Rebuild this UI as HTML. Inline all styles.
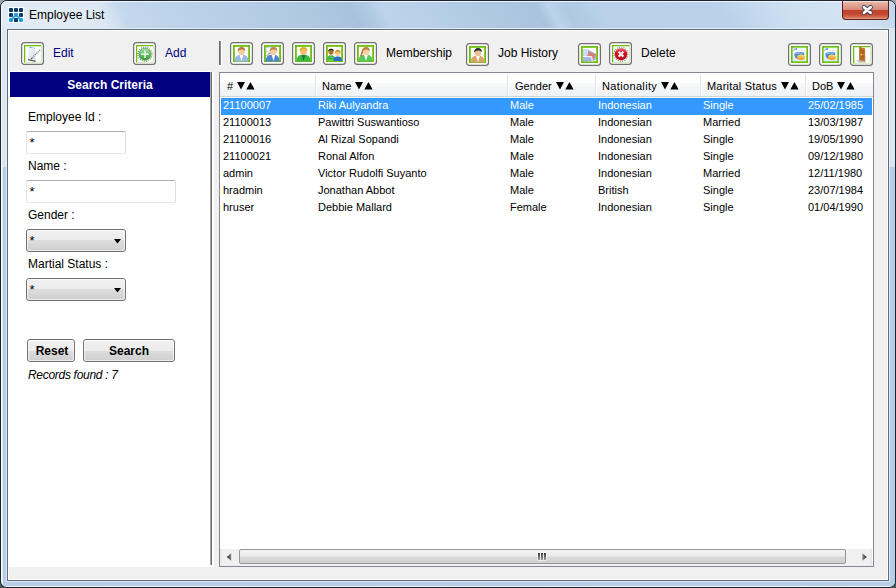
<!DOCTYPE html>
<html><head><meta charset="utf-8">
<style>
*{margin:0;padding:0;box-sizing:border-box}
html,body{width:896px;height:588px;overflow:hidden;background:linear-gradient(#a4a4a4,#8a8e8e 40px,#5a6660 560px,#4a5650);font-family:"Liberation Sans",sans-serif;}
.abs{position:absolute}
#win{position:absolute;left:0;top:0;width:896px;height:588px;border:1px solid #1b2430;border-radius:7px 7px 7px 7px;
 background:radial-gradient(ellipse 70px 22px at 60px 14px,rgba(236,243,250,.55),rgba(236,243,250,0)),linear-gradient(90deg,#dfe9f5 0px,#d8e5f3 100px,#c3d8ed 120px,#b9d0e9 200px,#b0c9e3 300px,#a8c2dd 352px,#b0c9e3 368px,#bcd3eb 384px,#b7cfe8 430px,#a9c3de 538px,#bcd4ec 552px,#afc9e3 568px,#b8d0ea 600px,#b9d1ea 720px,#cde0f2 790px,#d3e3f3 842px,#c2d7ec 896px);overflow:hidden}
#win:before{content:"";position:absolute;left:0;top:0;right:0;bottom:0;border:1px solid rgba(255,255,255,.75);border-radius:6px 6px 6px 6px}
#titlebg{position:absolute;left:2px;top:2px;width:892px;height:25px;background:radial-gradient(ellipse 70px 22px at 59px 13px,rgba(236,243,250,.55),rgba(236,243,250,0)),linear-gradient(60deg,#dfe9f5 5.6px,#d8e5f3 92.2px,#c3d8ed 109.6px,#b9d0e9 178.8px,#b0c9e3 265.4px,#a8c2dd 310.5px,#b0c9e3 324.3px,#bcd3eb 338.2px,#b7cfe8 378.0px,#a9c3de 471.6px,#bcd4ec 483.7px,#afc9e3 497.5px,#b8d0ea 525.2px,#b9d1ea 629.2px,#cde0f2 689.8px,#d3e3f3 734.8px,#c2d7ec 781.6px)}
#framet{position:absolute;left:2px;top:27px;width:892px;height:139px;background:#dae5f1}#frameb{position:absolute;left:2px;top:166px;width:892px;height:419px;background:#b7cee7}
#client{position:absolute;left:7px;top:29px;width:882px;height:552px;border:1px solid #5f6a77;background:#f0f0f0;box-shadow:0 0 0 1px rgba(235,245,255,.7)}
#client:before{content:"";position:absolute;left:0;top:0;right:0;bottom:0;border:1px solid #fff}
.t{position:absolute;white-space:nowrap;line-height:1}
.btn{position:absolute;width:23px;height:23px;border:1px solid #707070;border-radius:3px;background:#fcfcfc}
.gf{position:absolute;left:2px;top:2px;width:18px;height:18px;border:2px solid #6cc10a;background:#fff}
.tb{position:absolute;height:23px;border:1px solid #dbdfe6;border-top-color:#abadb3;border-left-color:#e2e3ea;border-right-color:#dbdfe6;border-bottom-color:#e3e9ef;border-radius:2px;background:#fff}
.cb{position:absolute;width:100px;height:23px;border:1px solid #707070;border-radius:3px;background:linear-gradient(#f2f2f2,#ebebeb 50%,#dddddd 50%,#cfcfcf)}
.cb:before,.pb:before{content:"";position:absolute;left:0;top:0;right:0;bottom:0;border:1px solid rgba(255,255,255,.6);border-radius:2px}
.pb{position:absolute;height:23px;border:1px solid #707070;border-radius:3px;background:linear-gradient(#f2f2f2,#ebebeb 50%,#dddddd 50%,#cfcfcf);text-align:center;font-size:12px;font-weight:bold;line-height:21px;color:#000}
.pb span{position:relative;top:1px}
</style></head><body>
<div id="win">
  <div id="titlebg"></div><div id="framet"></div><div id="frameb"></div>
</div>
<!-- title icon -->
<div class="abs" style="left:8px;top:7px;width:16px;height:16px;background:#fff"></div>
<svg class="abs" style="left:8px;top:7px" width="16" height="16" viewBox="0 0 16 16">
 <g fill="#0d3a66">
  <rect x="1" y="1" width="4" height="4" rx="1"/><rect x="6" y="1" width="4" height="4" rx="1"/><rect x="11" y="1" width="4" height="4" rx="1"/>
  <rect x="1" y="6" width="4" height="4" rx="1"/><rect x="11" y="6" width="4" height="4" rx="1"/>
  <rect x="6" y="11" width="4" height="4" rx="1"/>
 </g>
 <g fill="#1a9ee0">
  <rect x="6" y="6" width="4" height="4" rx="1"/><rect x="1" y="11" width="4" height="4" rx="1"/><rect x="11" y="11" width="4" height="4" rx="1"/>
  <path d="M6.8 9.2 L3.6 12.4 M9.2 9.2 L12.4 12.4" stroke="#1a9ee0" stroke-width="1.6"/>
 </g>
 <rect x="6" y="11" width="4" height="4" rx="1" fill="#0d3a66"/>
</svg>
<div class="t" style="left:29px;top:9px;font-size:12px;color:#000">Employee List</div>
<!-- close button -->
<div class="abs" style="left:842px;top:1px;width:47px;height:19px;border:1px solid #5c2418;border-top:none;border-radius:0 0 4px 4px;background:linear-gradient(#f6dcd6 0px,#f6dcd6 1px,#e8b4aa 1px,#e0a090 5px,#d88a7a 8.5px,#c4442c 9.5px,#c24630 13px,#d46a52 16px,#e49a84 18px)"></div>
<svg class="abs" style="left:859.5px;top:3px" width="15" height="14" viewBox="0 0 15 14">
 <path d="M4 4.2 L10.6 9.8 M10.6 4.2 L4 9.8" stroke="#404652" stroke-width="4.6" stroke-linecap="round"/>
 <path d="M4 4.2 L10.6 9.8 M10.6 4.2 L4 9.8" stroke="#fff" stroke-width="2.8" stroke-linecap="round"/>
</svg>

<div id="client"></div>

<!-- toolbar -->
<div class="t" style="left:53px;top:47px;font-size:12px;color:#000080">Edit</div>
<div class="t" style="left:165px;top:47px;font-size:12px;color:#000080">Add</div>
<div class="abs" style="left:219px;top:40px;width:3px;height:26px;background:#fff"></div><div class="abs" style="left:219px;top:41px;width:1px;height:24px;background:#6a6a6a"></div><div class="abs" style="left:220px;top:41px;width:1px;height:24px;background:#8c8c8c"></div>
<div class="t" style="left:386px;top:47px;font-size:12px;color:#000">Membership</div>
<div class="t" style="left:498px;top:47px;font-size:12px;color:#000">Job History</div>
<div class="t" style="left:641px;top:47px;font-size:12px;color:#000">Delete</div>

<!--ICONS-->
<svg class="abs" style="left:21px;top:42px" width="23" height="23" viewBox="0 0 23 23"><rect x="0.6" y="0.6" width="21.8" height="21.8" rx="2.6" fill="#fdfdfd" stroke="#707070" stroke-width="1.2"/><path d="M3.6 3V20.5 M3 3.6H20.5" stroke="#6cc00a" stroke-width="1.3" fill="none"/><path d="M20.4 4V20.4H4" stroke="#d8ecb8" stroke-width="1" fill="none"/><defs><linearGradient id="ge" x1="0" y1="0" x2="1" y2="1"><stop offset="0" stop-color="#f4f7fa"/><stop offset="1" stop-color="#d4dde6"/></linearGradient></defs><path d="M7.8 5.2 L14.2 5.6 L14.6 18.8 L7.2 17.8 Z" fill="url(#ge)"/><path d="M8.2 5.4 H11.6" stroke="#8eaac4" stroke-width="1"/><path d="M13 6.2 H14" stroke="#8eaac4" stroke-width="1"/><path d="M7 17.6 L14.6 19.4" stroke="#606060" stroke-width="1.3"/><path d="M19 8 L11 16.2" stroke="#8a8a8a" stroke-width="1.5" stroke-dasharray="1.1 0.9"/><path d="M11 16.2 L10.2 17" stroke="#444" stroke-width="1.2"/></svg>
<svg class="abs" style="left:133px;top:42px" width="23" height="23" viewBox="0 0 23 23"><rect x="0.6" y="0.6" width="21.8" height="21.8" rx="2.6" fill="#fdfdfd" stroke="#707070" stroke-width="1.2"/><path d="M3.6 3V20.5 M3 3.6H20.5" stroke="#6cc00a" stroke-width="1.3" fill="none"/><path d="M20.4 4V20.4H4" stroke="#d8ecb8" stroke-width="1" fill="none"/><defs><linearGradient id="ga" x1="0" y1="0" x2="0" y2="1"><stop offset="0" stop-color="#9ee69a"/><stop offset="1" stop-color="#2e9e30"/></linearGradient></defs><circle cx="12" cy="12.2" r="7" fill="none" stroke="#6a6a6a" stroke-width="1.1" stroke-dasharray="1.1 1.1" opacity=".8"/><circle cx="12" cy="12.2" r="6" fill="url(#ga)" stroke="#3a8a3a" stroke-width=".6"/><path d="M12 8.4V16 M8.2 12.2H15.8" stroke="#e8eee8" stroke-width="1.7"/></svg>
<svg class="abs" style="left:230px;top:42px" width="23" height="23" viewBox="0 0 23 23"><rect x="0.6" y="0.6" width="21.8" height="21.8" rx="2.6" fill="#fdfdfd" stroke="#707070" stroke-width="1.2"/><rect x="3.9" y="3.9" width="15.2" height="15.2" fill="none" stroke="#6cc00a" stroke-width="1.8"/><path d="M4.5 19.5 C4.5 14.6 7 12.8 11.5 12.8 C16 12.8 18.5 14.6 18.5 19.5Z" fill="#9cb8e6"/><path d="M9.7 13 L11.5 19 L13.3 13Z" fill="#fff"/><ellipse cx="11.5" cy="9" rx="3.4" ry="3.9" fill="#f5cf9a"/><path d="M7.7 9.6 C7.1 3.6 15.9 3.6 15.3 9 C13.5 6.8 9.5 6.8 7.7 9.6Z" fill="#b47a40"/></svg>
<svg class="abs" style="left:261px;top:42px" width="23" height="23" viewBox="0 0 23 23"><rect x="0.6" y="0.6" width="21.8" height="21.8" rx="2.6" fill="#fdfdfd" stroke="#707070" stroke-width="1.2"/><rect x="3.9" y="3.9" width="15.2" height="15.2" fill="none" stroke="#6cc00a" stroke-width="1.8"/><path d="M5 5.5 L10.5 5 L9.5 10.5 L7.2 11.5 L7.4 10 L5 9.5Z" fill="#fff" stroke="#a8bcd8" stroke-width=".7"/><path d="M4.5 19.5 C4.5 14.6 7 12.8 12.5 12.8 C16 12.8 18.5 14.6 18.5 19.5Z" fill="#4f86d0"/><path d="M10.7 13 L12.5 19 L14.3 13Z" fill="#fff"/><ellipse cx="12.5" cy="9" rx="3.4" ry="3.9" fill="#f5cf9a"/><path d="M8.7 9.6 C8.1 3.6 16.9 3.6 16.3 9 C14.5 6.8 10.5 6.8 8.7 9.6Z" fill="#c08850"/><path d="M9.3 10.5 C8.5 13 7 13 5.5 13.5" stroke="#b07a40" stroke-width="1" fill="none"/></svg>
<svg class="abs" style="left:292px;top:42px" width="23" height="23" viewBox="0 0 23 23"><rect x="0.6" y="0.6" width="21.8" height="21.8" rx="2.6" fill="#fdfdfd" stroke="#707070" stroke-width="1.2"/><rect x="3.9" y="3.9" width="15.2" height="15.2" fill="none" stroke="#6cc00a" stroke-width="1.8"/><path d="M4.5 19.5 C4.5 14.6 7 12.8 11.5 12.8 C16 12.8 18.5 14.6 18.5 19.5Z" fill="#3db848"/><path d="M9.7 13 L11.5 19 L13.3 13Z" fill="#1e7a28"/><ellipse cx="11.5" cy="9" rx="3.4" ry="3.9" fill="#fcbc78"/><path d="M7.7 9.6 C7.1 3.6 15.9 3.6 15.3 9 C13.5 6.8 9.5 6.8 7.7 9.6Z" fill="#e8b020"/></svg>
<svg class="abs" style="left:323px;top:42px" width="23" height="23" viewBox="0 0 23 23"><rect x="0.6" y="0.6" width="21.8" height="21.8" rx="2.6" fill="#fdfdfd" stroke="#707070" stroke-width="1.2"/><rect x="3.9" y="3.9" width="15.2" height="15.2" fill="none" stroke="#6cc00a" stroke-width="1.8"/><path d="M3.8 18 C3.8 14.5 5.5 13.2 8 13.2 C10.5 13.2 12.5 14.5 12.5 18Z" fill="#48b850"/><ellipse cx="8" cy="9.8" rx="2.6" ry="3" fill="#b87420"/><path d="M5.2 9.5 C5 6 11 6 10.8 9 C9 7.8 7 7.8 5.2 9.5Z" fill="#222"/><path d="M10.5 19 C10.5 15.5 12 14.5 14.8 14.5 C17.5 14.5 19 15.5 19 19Z" fill="#2a70c8"/><ellipse cx="14.8" cy="11" rx="2.6" ry="3" fill="#fcc890"/><path d="M12 11.5 C11.2 6.5 18.5 6.5 17.6 11.5 C17 9 12.8 9 12 11.5Z" fill="#c8902a"/></svg>
<svg class="abs" style="left:354px;top:42px" width="23" height="23" viewBox="0 0 23 23"><rect x="0.6" y="0.6" width="21.8" height="21.8" rx="2.6" fill="#fdfdfd" stroke="#707070" stroke-width="1.2"/><rect x="3.9" y="3.9" width="15.2" height="15.2" fill="none" stroke="#6cc00a" stroke-width="1.8"/><path d="M4.5 19.5 C4.5 14.6 7 12.8 12 12.8 C16 12.8 18.5 14.6 18.5 19.5Z" fill="#58c85a"/><path d="M10.2 13 L12 19 L13.8 13Z" fill="#fff"/><ellipse cx="12" cy="9" rx="3.4" ry="3.9" fill="#f8d0a0"/><path d="M8.2 9.6 C7.6 3.6 16.4 3.6 15.8 9 C14 6.8 10 6.8 8.2 9.6Z" fill="#c08040"/><path d="M9 8 C7.5 10 8 13 6.5 14.5" stroke="#b87838" stroke-width="1.6" fill="none"/></svg>
<svg class="abs" style="left:466px;top:43px" width="23" height="23" viewBox="0 0 23 23"><rect x="0.6" y="0.6" width="21.8" height="21.8" rx="2.6" fill="#fdfdfd" stroke="#707070" stroke-width="1.2"/><rect x="3.9" y="3.9" width="15.2" height="15.2" fill="none" stroke="#6cc00a" stroke-width="1.8"/><path d="M4.5 19.5 C4.5 14.6 7 12.8 12 12.8 C16 12.8 18.5 14.6 18.5 19.5Z" fill="#d8a468"/><path d="M10.2 13 L12 19 L13.8 13Z" fill="#fff"/><ellipse cx="12" cy="9" rx="3.4" ry="3.9" fill="#eec090"/><path d="M8.2 9.6 C7.6 3.6 16.4 3.6 15.8 9 C14 6.8 10 6.8 8.2 9.6Z" fill="#2a2e38"/></svg>
<svg class="abs" style="left:578px;top:43px" width="23" height="23" viewBox="0 0 23 23"><rect x="0.6" y="0.6" width="21.8" height="21.8" rx="2.6" fill="#fdfdfd" stroke="#707070" stroke-width="1.2"/><rect x="3.9" y="3.9" width="15.2" height="15.2" fill="none" stroke="#6cc00a" stroke-width="1.8"/><path d="M5 6 L9.5 6.5 L18 10.5 L18 16.5 L14 18.5 L5 18.5 Z" fill="#a4b4e4"/><path d="M5 6 L9.5 6.5 L11 11.5 L5.5 14 Z" fill="#d4dcf6"/><path d="M10.5 8.5 L18 11.5 L15 18 L14.2 13.8 L9.5 12.5Z" fill="#e07868" opacity=".9"/><path d="M5 13.5 L13.8 13.8 L14.2 18.5" stroke="#fff" stroke-width="1" fill="none"/><path d="M12 6.5 L18 10" stroke="#fff" stroke-width="1.4" fill="none"/></svg>
<svg class="abs" style="left:609px;top:42px" width="23" height="23" viewBox="0 0 23 23"><rect x="0.6" y="0.6" width="21.8" height="21.8" rx="2.6" fill="#fdfdfd" stroke="#707070" stroke-width="1.2"/><path d="M3.6 3V20.5 M3 3.6H20.5" stroke="#6cc00a" stroke-width="1.3" fill="none"/><path d="M20.4 4V20.4H4" stroke="#d8ecb8" stroke-width="1" fill="none"/><defs><linearGradient id="gd" x1="0" y1="0" x2="0" y2="1"><stop offset="0" stop-color="#e87080"/><stop offset=".4" stop-color="#d81020"/><stop offset="1" stop-color="#b80818"/></linearGradient></defs><circle cx="12" cy="12.2" r="7" fill="none" stroke="#6a6a6a" stroke-width="1.1" stroke-dasharray="1.1 1.1" opacity=".8"/><circle cx="12" cy="12.2" r="6.2" fill="url(#gd)"/><path d="M9.6 9.8 L14.4 14.6 M14.4 9.8 L9.6 14.6" stroke="#f0f0f0" stroke-width="2.2"/></svg>
<svg class="abs" style="left:788px;top:43px" width="23" height="23" viewBox="0 0 23 23"><rect x="0.6" y="0.6" width="21.8" height="21.8" rx="2.6" fill="#fdfdfd" stroke="#707070" stroke-width="1.2"/><rect x="3.9" y="3.9" width="15.2" height="15.2" fill="none" stroke="#6cc00a" stroke-width="1.8"/><defs><linearGradient id="gb" x1="0" y1="0" x2="0" y2="1"><stop offset="0" stop-color="#f6f9fc"/><stop offset="1" stop-color="#dde8f2"/></linearGradient><linearGradient id="go" x1="0" y1="0" x2="0" y2="1"><stop offset="0" stop-color="#ffe070"/><stop offset="1" stop-color="#f09010"/></linearGradient></defs><rect x="4.8" y="4.8" width="13.4" height="13.4" fill="url(#gb)"/><path d="M5.5 7.5 C6 5.8 7.5 5.5 8.5 6 M8.6 5 V6.5 H7.2" stroke="#5a8ad8" stroke-width=".9" fill="none"/><path d="M6.5 11.5 C6.5 8.8 11 8.6 14.5 9.2 C16 9.5 16.5 10.5 16 12 L14 15.5 L9.5 16 C7.5 15.5 6.5 13.5 6.5 11.5Z" fill="#4a88d8"/><path d="M7.5 10.8 C9 9.8 12 9.8 14.5 10.3" stroke="#a8ccf4" stroke-width="1" fill="none"/><ellipse cx="13" cy="14.3" rx="3.9" ry="2.7" fill="url(#go)"/></svg>
<svg class="abs" style="left:819px;top:43px" width="23" height="23" viewBox="0 0 23 23"><rect x="0.6" y="0.6" width="21.8" height="21.8" rx="2.6" fill="#fdfdfd" stroke="#707070" stroke-width="1.2"/><rect x="3.9" y="3.9" width="15.2" height="15.2" fill="none" stroke="#6cc00a" stroke-width="1.8"/><defs><linearGradient id="gb" x1="0" y1="0" x2="0" y2="1"><stop offset="0" stop-color="#f6f9fc"/><stop offset="1" stop-color="#dde8f2"/></linearGradient><linearGradient id="go" x1="0" y1="0" x2="0" y2="1"><stop offset="0" stop-color="#ffe070"/><stop offset="1" stop-color="#f09010"/></linearGradient></defs><rect x="4.8" y="4.8" width="13.4" height="13.4" fill="url(#gb)"/><path d="M5.5 7.5 C6 5.8 7.5 5.5 8.5 6 M8.6 5 V6.5 H7.2" stroke="#5a8ad8" stroke-width=".9" fill="none"/><path d="M6.5 11.5 C6.5 8.8 11 8.6 14.5 9.2 C16 9.5 16.5 10.5 16 12 L14 15.5 L9.5 16 C7.5 15.5 6.5 13.5 6.5 11.5Z" fill="#4a88d8"/><path d="M7.5 10.8 C9 9.8 12 9.8 14.5 10.3" stroke="#a8ccf4" stroke-width="1" fill="none"/><ellipse cx="13" cy="14.3" rx="3.9" ry="2.7" fill="url(#go)"/></svg>
<svg class="abs" style="left:850px;top:43px" width="23" height="23" viewBox="0 0 23 23"><rect x="0.6" y="0.6" width="21.8" height="21.8" rx="2.6" fill="#fdfdfd" stroke="#707070" stroke-width="1.2"/><path d="M3.6 3V20.5 M3 3.6H20.5" stroke="#6cc00a" stroke-width="1.3" fill="none"/><path d="M20.4 4V20.4H4" stroke="#d8ecb8" stroke-width="1" fill="none"/><path d="M5.5 17.5 L10 19.8 L17 19.3 L12 17Z" fill="#a8a8a8" opacity=".75"/><path d="M9.5 4 L15 5.2 L15.3 18.5 L9.5 17.2Z" fill="#c47a2a"/><path d="M9.5 4 L10.6 4.2 V17.4 L9.5 17.2Z" fill="#9a5a18"/><path d="M11.2 6.2 L14.2 6.8 V11 L11.2 10.5Z M11.2 11.8 L14.2 12.3 V17 L11.2 16.4Z" fill="#9c5818" opacity=".55"/><circle cx="11.3" cy="11.6" r=".9" fill="#ffd040"/></svg>
<!--/ICONS-->
<!-- left panel -->
<div class="abs" style="left:9px;top:71px;width:205px;height:496px;background:#fff"></div>
<div class="abs" style="left:210px;top:71px;width:4px;height:1px;background:#f0f0f0"></div><div class="abs" style="left:10px;top:72px;width:200px;height:25px;background:#000080"></div>
<div class="t" style="left:10px;top:79px;width:200px;text-align:center;font-size:12px;font-weight:bold;color:#fff">Search Criteria</div>
<div class="abs" style="left:210px;top:72px;width:1px;height:493px;background:#a8a8a8"></div>
<div class="abs" style="left:211px;top:72px;width:1px;height:493px;background:#6a6a6a"></div>

<!-- grid -->
<div class="abs" style="left:219px;top:72px;width:655px;height:495px;border:1px solid #828790;background:#fff"></div>

<!-- grid header -->
<div class="abs" style="left:220px;top:73px;width:653px;height:10px;background:#fff"></div>
<div class="abs" style="left:220px;top:83px;width:653px;height:13px;background:linear-gradient(#f7f8fa,#f1f2f4)"></div>
<div class="abs" style="left:220px;top:96px;width:653px;height:1px;background:#d5d5d5"></div>
<div class="abs" style="left:315px;top:74px;width:1px;height:22px;background:#e2e3ea"></div><div class="abs" style="left:316px;top:74px;width:1px;height:22px;background:#fff"></div><div class="abs" style="left:507px;top:74px;width:1px;height:22px;background:#e2e3ea"></div><div class="abs" style="left:508px;top:74px;width:1px;height:22px;background:#fff"></div><div class="abs" style="left:595px;top:74px;width:1px;height:22px;background:#e2e3ea"></div><div class="abs" style="left:596px;top:74px;width:1px;height:22px;background:#fff"></div><div class="abs" style="left:700px;top:74px;width:1px;height:22px;background:#e2e3ea"></div><div class="abs" style="left:701px;top:74px;width:1px;height:22px;background:#fff"></div><div class="abs" style="left:805px;top:74px;width:1px;height:22px;background:#e2e3ea"></div><div class="abs" style="left:806px;top:74px;width:1px;height:22px;background:#fff"></div>
<div class="t" style="left:227px;top:81px;font-size:11px;color:#000">#</div>
<div class="t" style="left:322px;top:81px;font-size:11px;color:#000">Name</div>
<div class="t" style="left:515px;top:81px;font-size:11px;color:#000">Gender</div>
<div class="t" style="left:602px;top:81px;font-size:11px;color:#000;letter-spacing:0.35px">Nationality</div>
<div class="t" style="left:707px;top:81px;font-size:11px;color:#000;letter-spacing:0.2px">Marital Status</div>
<div class="t" style="left:812px;top:81px;font-size:11px;color:#000">DoB</div>

<div class="abs" style="left:221px;top:98px;width:651px;height:17px;background:#3399ff"></div>
<div class="t" style="left:223px;top:100px;font-size:11px;color:#fff">21100007</div><div class="t" style="left:318px;top:100px;font-size:11px;color:#fff">Riki Aulyandra</div><div class="t" style="left:510px;top:100px;font-size:11px;color:#fff">Male</div><div class="t" style="left:598px;top:100px;font-size:11px;color:#fff">Indonesian</div><div class="t" style="left:703px;top:100px;font-size:11px;color:#fff">Single</div><div class="t" style="left:808px;top:100px;font-size:11px;color:#fff">25/02/1985</div>
<div class="t" style="left:223px;top:117px;font-size:11px;color:#000">21100013</div><div class="t" style="left:318px;top:117px;font-size:11px;color:#000">Pawittri Suswantioso</div><div class="t" style="left:510px;top:117px;font-size:11px;color:#000">Male</div><div class="t" style="left:598px;top:117px;font-size:11px;color:#000">Indonesian</div><div class="t" style="left:703px;top:117px;font-size:11px;color:#000">Married</div><div class="t" style="left:808px;top:117px;font-size:11px;color:#000">13/03/1987</div>
<div class="t" style="left:223px;top:134px;font-size:11px;color:#000">21100016</div><div class="t" style="left:318px;top:134px;font-size:11px;color:#000">Al Rizal Sopandi</div><div class="t" style="left:510px;top:134px;font-size:11px;color:#000">Male</div><div class="t" style="left:598px;top:134px;font-size:11px;color:#000">Indonesian</div><div class="t" style="left:703px;top:134px;font-size:11px;color:#000">Single</div><div class="t" style="left:808px;top:134px;font-size:11px;color:#000">19/05/1990</div>
<div class="t" style="left:223px;top:151px;font-size:11px;color:#000">21100021</div><div class="t" style="left:318px;top:151px;font-size:11px;color:#000">Ronal Alfon</div><div class="t" style="left:510px;top:151px;font-size:11px;color:#000">Male</div><div class="t" style="left:598px;top:151px;font-size:11px;color:#000">Indonesian</div><div class="t" style="left:703px;top:151px;font-size:11px;color:#000">Single</div><div class="t" style="left:808px;top:151px;font-size:11px;color:#000">09/12/1980</div>
<div class="t" style="left:223px;top:168px;font-size:11px;color:#000">admin</div><div class="t" style="left:318px;top:168px;font-size:11px;color:#000">Victor Rudolfi Suyanto</div><div class="t" style="left:510px;top:168px;font-size:11px;color:#000">Male</div><div class="t" style="left:598px;top:168px;font-size:11px;color:#000">Indonesian</div><div class="t" style="left:703px;top:168px;font-size:11px;color:#000">Married</div><div class="t" style="left:808px;top:168px;font-size:11px;color:#000">12/11/1980</div>
<div class="t" style="left:223px;top:185px;font-size:11px;color:#000">hradmin</div><div class="t" style="left:318px;top:185px;font-size:11px;color:#000">Jonathan Abbot</div><div class="t" style="left:510px;top:185px;font-size:11px;color:#000">Male</div><div class="t" style="left:598px;top:185px;font-size:11px;color:#000">British</div><div class="t" style="left:703px;top:185px;font-size:11px;color:#000">Single</div><div class="t" style="left:808px;top:185px;font-size:11px;color:#000">23/07/1984</div>
<div class="t" style="left:223px;top:202px;font-size:11px;color:#000">hruser</div><div class="t" style="left:318px;top:202px;font-size:11px;color:#000">Debbie Mallard</div><div class="t" style="left:510px;top:202px;font-size:11px;color:#000">Female</div><div class="t" style="left:598px;top:202px;font-size:11px;color:#000">Indonesian</div><div class="t" style="left:703px;top:202px;font-size:11px;color:#000">Single</div><div class="t" style="left:808px;top:202px;font-size:11px;color:#000">01/04/1990</div>

<svg class="abs" style="left:237.2px;top:82px" width="18" height="8" viewBox="0 0 18 8"><path d="M0 0H8L4 7.5Z M9.3 7.5H17.6L13.45 0Z" fill="#000"/></svg>
<svg class="abs" style="left:354.8px;top:82px" width="18" height="8" viewBox="0 0 18 8"><path d="M0 0H8L4 7.5Z M9.3 7.5H17.6L13.45 0Z" fill="#000"/></svg>
<svg class="abs" style="left:555.6px;top:82px" width="18" height="8" viewBox="0 0 18 8"><path d="M0 0H8L4 7.5Z M9.3 7.5H17.6L13.45 0Z" fill="#000"/></svg>
<svg class="abs" style="left:661.3px;top:82px" width="18" height="8" viewBox="0 0 18 8"><path d="M0 0H8L4 7.5Z M9.3 7.5H17.6L13.45 0Z" fill="#000"/></svg>
<svg class="abs" style="left:781px;top:82px" width="18" height="8" viewBox="0 0 18 8"><path d="M0 0H8L4 7.5Z M9.3 7.5H17.6L13.45 0Z" fill="#000"/></svg>
<svg class="abs" style="left:837.4px;top:82px" width="18" height="8" viewBox="0 0 18 8"><path d="M0 0H8L4 7.5Z M9.3 7.5H17.6L13.45 0Z" fill="#000"/></svg>
<!-- scrollbar -->
<div class="abs" style="left:220px;top:549px;width:652px;height:17px;background:linear-gradient(90deg,#e6e6e6,#f0f0f0 3px,#f0f0f0 calc(100% - 3px),#e6e6e6);"></div>
<svg class="abs" style="left:226px;top:553px" width="6" height="8" viewBox="0 0 6 8"><defs><linearGradient id="sa1" x1="0" y1="0" x2="1" y2="0"><stop offset="0" stop-color="#222"/><stop offset="1" stop-color="#8a8a8a"/></linearGradient></defs><path d="M5.2 0.2 L5.2 7.8 L0.8 4 Z" fill="url(#sa1)"/></svg>
<div class="abs" style="left:239px;top:549px;width:607px;height:15px;border:1px solid #979797;border-radius:2px;background:linear-gradient(#f3f3f3,#ebebeb 45%,#d9d9d9 55%,#d0d0d0)"></div>
<div class="abs" style="left:537px;top:552px;width:10px;height:9px;background:rgba(255,255,255,.45);border-radius:1px"></div>
<div class="abs" style="left:538px;top:553px;width:1.5px;height:7px;background:linear-gradient(#333,#a0a0a0)"></div>
<div class="abs" style="left:541px;top:553px;width:1.5px;height:7px;background:linear-gradient(#333,#a0a0a0)"></div>
<div class="abs" style="left:544px;top:553px;width:1.5px;height:7px;background:linear-gradient(#333,#a0a0a0)"></div>
<svg class="abs" style="left:861.5px;top:553px" width="6" height="8" viewBox="0 0 6 8"><defs><linearGradient id="sa2" x1="0" y1="0" x2="1" y2="0"><stop offset="0" stop-color="#8a8a8a"/><stop offset="1" stop-color="#222"/></linearGradient></defs><path d="M0.4 0.2 L0.4 7.8 L4.8 4 Z" fill="url(#sa2)"/></svg>

<!-- form -->
<div class="t" style="left:28px;top:111px;font-size:12px;color:#000">Employee Id :</div>
<div class="tb" style="left:26px;top:131px;width:100px"></div>
<div class="t" style="left:29.5px;top:135.5px;font-size:13px;color:#000">*</div>
<div class="t" style="left:28px;top:160px;font-size:12px;color:#000">Name :</div>
<div class="tb" style="left:26px;top:180px;width:150px"></div>
<div class="t" style="left:29.5px;top:184.5px;font-size:13px;color:#000">*</div>
<div class="t" style="left:28px;top:209px;font-size:12px;color:#000">Gender :</div>
<div class="cb" style="left:26px;top:229px"></div>
<div class="t" style="left:29.5px;top:234px;font-size:13px;color:#000">*</div>
<svg class="abs" style="left:114px;top:239px" width="8" height="5" viewBox="0 0 8 5"><path d="M0 0H7L3.5 4.5Z" fill="#000"/></svg>
<div class="t" style="left:28px;top:258px;font-size:12px;color:#000">Martial Status :</div>
<div class="cb" style="left:26px;top:278px"></div>
<div class="t" style="left:29.5px;top:283px;font-size:13px;color:#000">*</div>
<svg class="abs" style="left:114px;top:288px" width="8" height="5" viewBox="0 0 8 5"><path d="M0 0H7L3.5 4.5Z" fill="#000"/></svg>
<div class="pb" style="left:27px;top:339px;width:48px"><span style="left:1px">Reset</span></div>
<div class="pb" style="left:83px;top:339px;width:92px"><span>Search</span></div>
<div class="t" style="left:28px;top:369px;font-size:12px;font-style:italic;color:#000;letter-spacing:-0.3px">Records found : 7</div>
</body></html>
